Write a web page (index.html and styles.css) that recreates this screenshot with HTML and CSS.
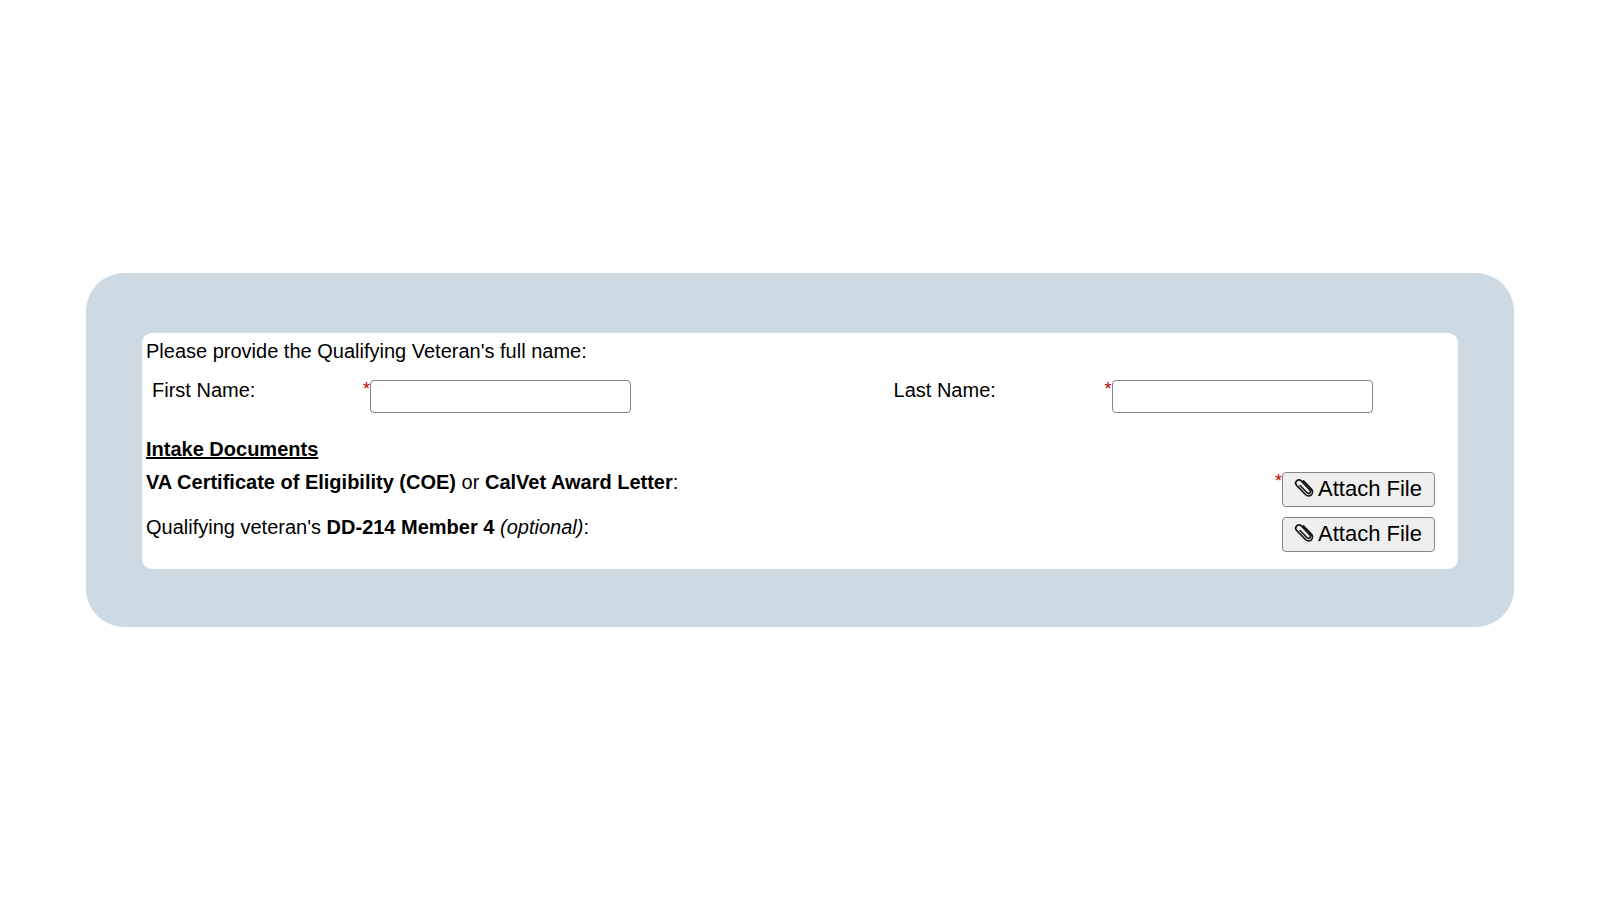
FILE: index.html
```html
<!DOCTYPE html>
<html lang="en">
<head>
    <meta charset="UTF-8">
    <title>Intake Documents</title>
    <link rel="stylesheet" href="styles.css">
</head>
<body>
    <div class="frame">
        <form class="panel">
            <p class="intro">Please provide the Qualifying Veteran's full name:</p>

            <div class="name-row">
                <div class="field">
                    <label for="firstName">First Name:</label>
                    <span class="required">*</span>
                    <input type="text" id="firstName" required>
                </div>
                <div class="field">
                    <label for="lastName">Last Name:</label>
                    <span class="required">*</span>
                    <input type="text" id="lastName" required>
                </div>
            </div>

            <h2>Intake Documents</h2>

            <div class="doc-row">
                <p id="coeLabel"><b>VA Certificate of Eligibility (COE)</b> or <b>CalVet Award Letter</b>:</p>
                <span class="required">*</span>
                <button type="button" aria-describedby="coeLabel">
                    <svg class="clip" viewBox="0 0 18 20" aria-hidden="true">
                        <path transform="translate(9 9) rotate(-44)" d="M4.500-5.500V6a4 4 0 0 1-8 0V-7a3.200 3.200 0 0 1 6.400 0V5.500a2 2 0 0 1-4 0V-4.500"/>
                    </svg>
                    Attach File
                </button>
            </div>
            <div class="doc-row">
                <p id="ddLabel">Qualifying veteran's <b>DD-214 Member 4</b> <i>(optional)</i>:</p>
                <button type="button" aria-describedby="ddLabel">
                    <svg class="clip" viewBox="0 0 18 20" aria-hidden="true">
                        <path transform="translate(9 9) rotate(-44)" d="M4.500-5.500V6a4 4 0 0 1-8 0V-7a3.200 3.200 0 0 1 6.400 0V5.500a2 2 0 0 1-4 0V-4.500"/>
                    </svg>
                    Attach File
                </button>
            </div>
        </form>
    </div>
</body>
</html>
```
FILE: styles.css
```css
* {
    box-sizing: border-box;
}
body {
    display: flex;
    align-items: center;
    min-height: 100vh;
    margin: 0;
    padding: 0 86px;
    background: #fff;
    color: #000;
    font-family: "Liberation Sans", Arial, sans-serif;
    font-size: 20px;
    line-height: 24px;
}
.frame {
    flex: 1;
    padding: 60px 56px 58px;
    background: #cedae3;
    border-radius: 38px;
}
.panel {
    padding: 6px 23px 9px 4px;
    background: #fff;
    border-radius: 10px;
}
p, h2 {
    margin: 0;
}
.name-row {
    display: grid;
    grid-template-columns: 57fr 43fr;
    margin: 15px -18px 24px 6px;
}
.field {
    display: flex;
    align-items: flex-start;
}
.field label {
    width: 211px;
}
.field input {
    width: 261px;
    height: 33px;
    margin-top: 2px;
    padding: 2px 6px;
    border: 1px solid #858585;
    border-radius: 4px;
    font: inherit;
}
.required {
    width: 7px;
    color: #c00000;
    font-size: 18px;
    line-height: 22px;
}
h2 {
    margin-bottom: 9px;
    font-size: 20px;
    text-decoration: underline;
}
.doc-row {
    display: flex;
    align-items: flex-start;
    min-height: 45px;
}
.doc-row p {
    flex: 1;
}
.doc-row button {
    display: flex;
    align-items: center;
    gap: 5px;
    width: 153px;
    height: 35px;
    margin-top: 2px;
    padding: 0 12px 2px;
    border: 1px solid #858585;
    border-radius: 4px;
    background: #efefef;
    color: #000;
    font-family: inherit;
    font-size: 22px;
    white-space: nowrap;
}
.clip {
    flex: none;
    width: 18px;
    height: 20px;
    overflow: visible;
    fill: none;
    stroke: #1a1a1a;
    stroke-width: 1.7;
    stroke-linecap: round;
}
```
